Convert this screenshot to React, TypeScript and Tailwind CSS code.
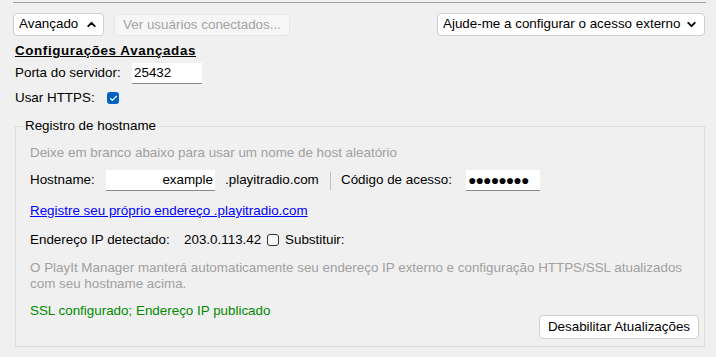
import { ChevronUp, ChevronDown, Check } from "lucide-react";

export default function App() {
  return (
    <div className="relative w-[716px] h-[357px] overflow-hidden bg-[#f0f0f0] text-[13.4px] text-black font-['Liberation_Sans',Arial,sans-serif]">
      <div className="pt-[2px] pl-[13px] pr-[10px]">
        <div className="h-px bg-[#a0a0a0]" />
      </div>

      {/* top toolbar */}
      <div className="mt-[10px] flex items-center justify-between pl-[13px] pr-[11px]">
        <div className="flex items-center gap-[10px]">
          <button className="flex h-[23px] w-[91px] items-center justify-between rounded-[4px] border border-[#cfcfcf] bg-white pl-[5px] pr-[5px]">
            <span>Avançado</span>
            <ChevronUp size={13} strokeWidth={3.5} />
          </button>
          <button className="h-[22px] w-[176px] rounded-[4px] border border-[#e6e6e6] bg-[#f6f6f6] text-[#a3a3a3]">
            Ver usuários conectados...
          </button>
        </div>
        <button className="flex h-[23px] w-[268px] items-center justify-between rounded-[4px] border border-[#cfcfcf] bg-white pl-[5px] pr-[6px]">
          <span>Ajude-me a configurar o acesso externo</span>
          <ChevronDown size={13} strokeWidth={3.5} />
        </button>
      </div>

      <div className="pl-[15px] pr-[11px]">
        <div className="mt-[7px] font-bold underline leading-[15px] tracking-[0.6px]">Configurações Avançadas</div>

        <div className="mt-[5px] flex items-center">
          <span className="w-[117px]">Porta do servidor:</span>
          <div className="flex h-[21px] w-[70px] items-center border-b border-[#8a8a8a] bg-white px-[2px]">25432</div>
        </div>

        <div className="mt-[4px] flex h-[20px] items-center">
          <span className="w-[92px]">Usar HTTPS:</span>
          <span className="flex h-[12px] w-[12px] items-center justify-center rounded-[3px] bg-[#0063c4]">
            <Check size={9} strokeWidth={3} className="text-white" />
          </span>
        </div>

        {/* group box */}
        <div className="relative mt-[18px] h-[221px] border border-[#dcdcdc] pl-[14px] pr-[5px]">
          <span className="absolute left-[7px] top-[-9px] bg-[#f0f0f0] px-[2px] leading-[16px]">Registro de hostname</span>

          <div className="mt-[18px] leading-[16px] text-[#a0a0a0]">Deixe em branco abaixo para usar um nome de host aleatório</div>

          <div className="mt-[9px] flex h-[21px] items-center">
            <span className="w-[76px]">Hostname:</span>
            <div className="flex h-[21px] w-[109px] items-center justify-end border-b border-[#8a8a8a] bg-white px-[2px]">example</div>
            <span className="ml-[10px] w-[105px]">.playitradio.com</span>
            <span className="h-[18px] w-px bg-[#bdbdbd]" />
            <span className="ml-[10px] w-[125px]">Código de acesso:</span>
            <div className="flex h-[21px] w-[74px] items-center border-b border-[#8a8a8a] bg-white pl-[2px] text-[14px] tracking-[-0.9px]">●●●●●●●●</div>
          </div>

          <div className="mt-[12px] leading-[16px]">
            <a className="text-[#0000ff] underline">Registre seu próprio endereço .playitradio.com</a>
          </div>

          <div className="mt-[13px] flex h-[16px] items-center">
            <span className="w-[154px]">Endereço IP detectado:</span>
            <span className="w-[83px]">203.0.113.42</span>
            <span className="h-[12px] w-[12px] rounded-[3px] border border-[#333] bg-[#f7f7f7]" />
            <span className="ml-[6px]">Substituir:</span>
          </div>

          <div className="mt-[12px] leading-[16px] text-[#a0a0a0]">
            O PlayIt Manager manterá automaticamente seu endereço IP externo e configuração HTTPS/SSL atualizados
            <br />
            com seu hostname acima.
          </div>

          <div className="mt-[11px] leading-[15px] text-[#008a00]">SSL configurado; Endereço IP publicado</div>

          <div className="-mt-[3px] flex justify-end">
            <button className="h-[24px] w-[160px] rounded-[4px] border border-[#cfcfcf] bg-white">Desabilitar Atualizações</button>
          </div>
        </div>
      </div>
    </div>
  );
}
